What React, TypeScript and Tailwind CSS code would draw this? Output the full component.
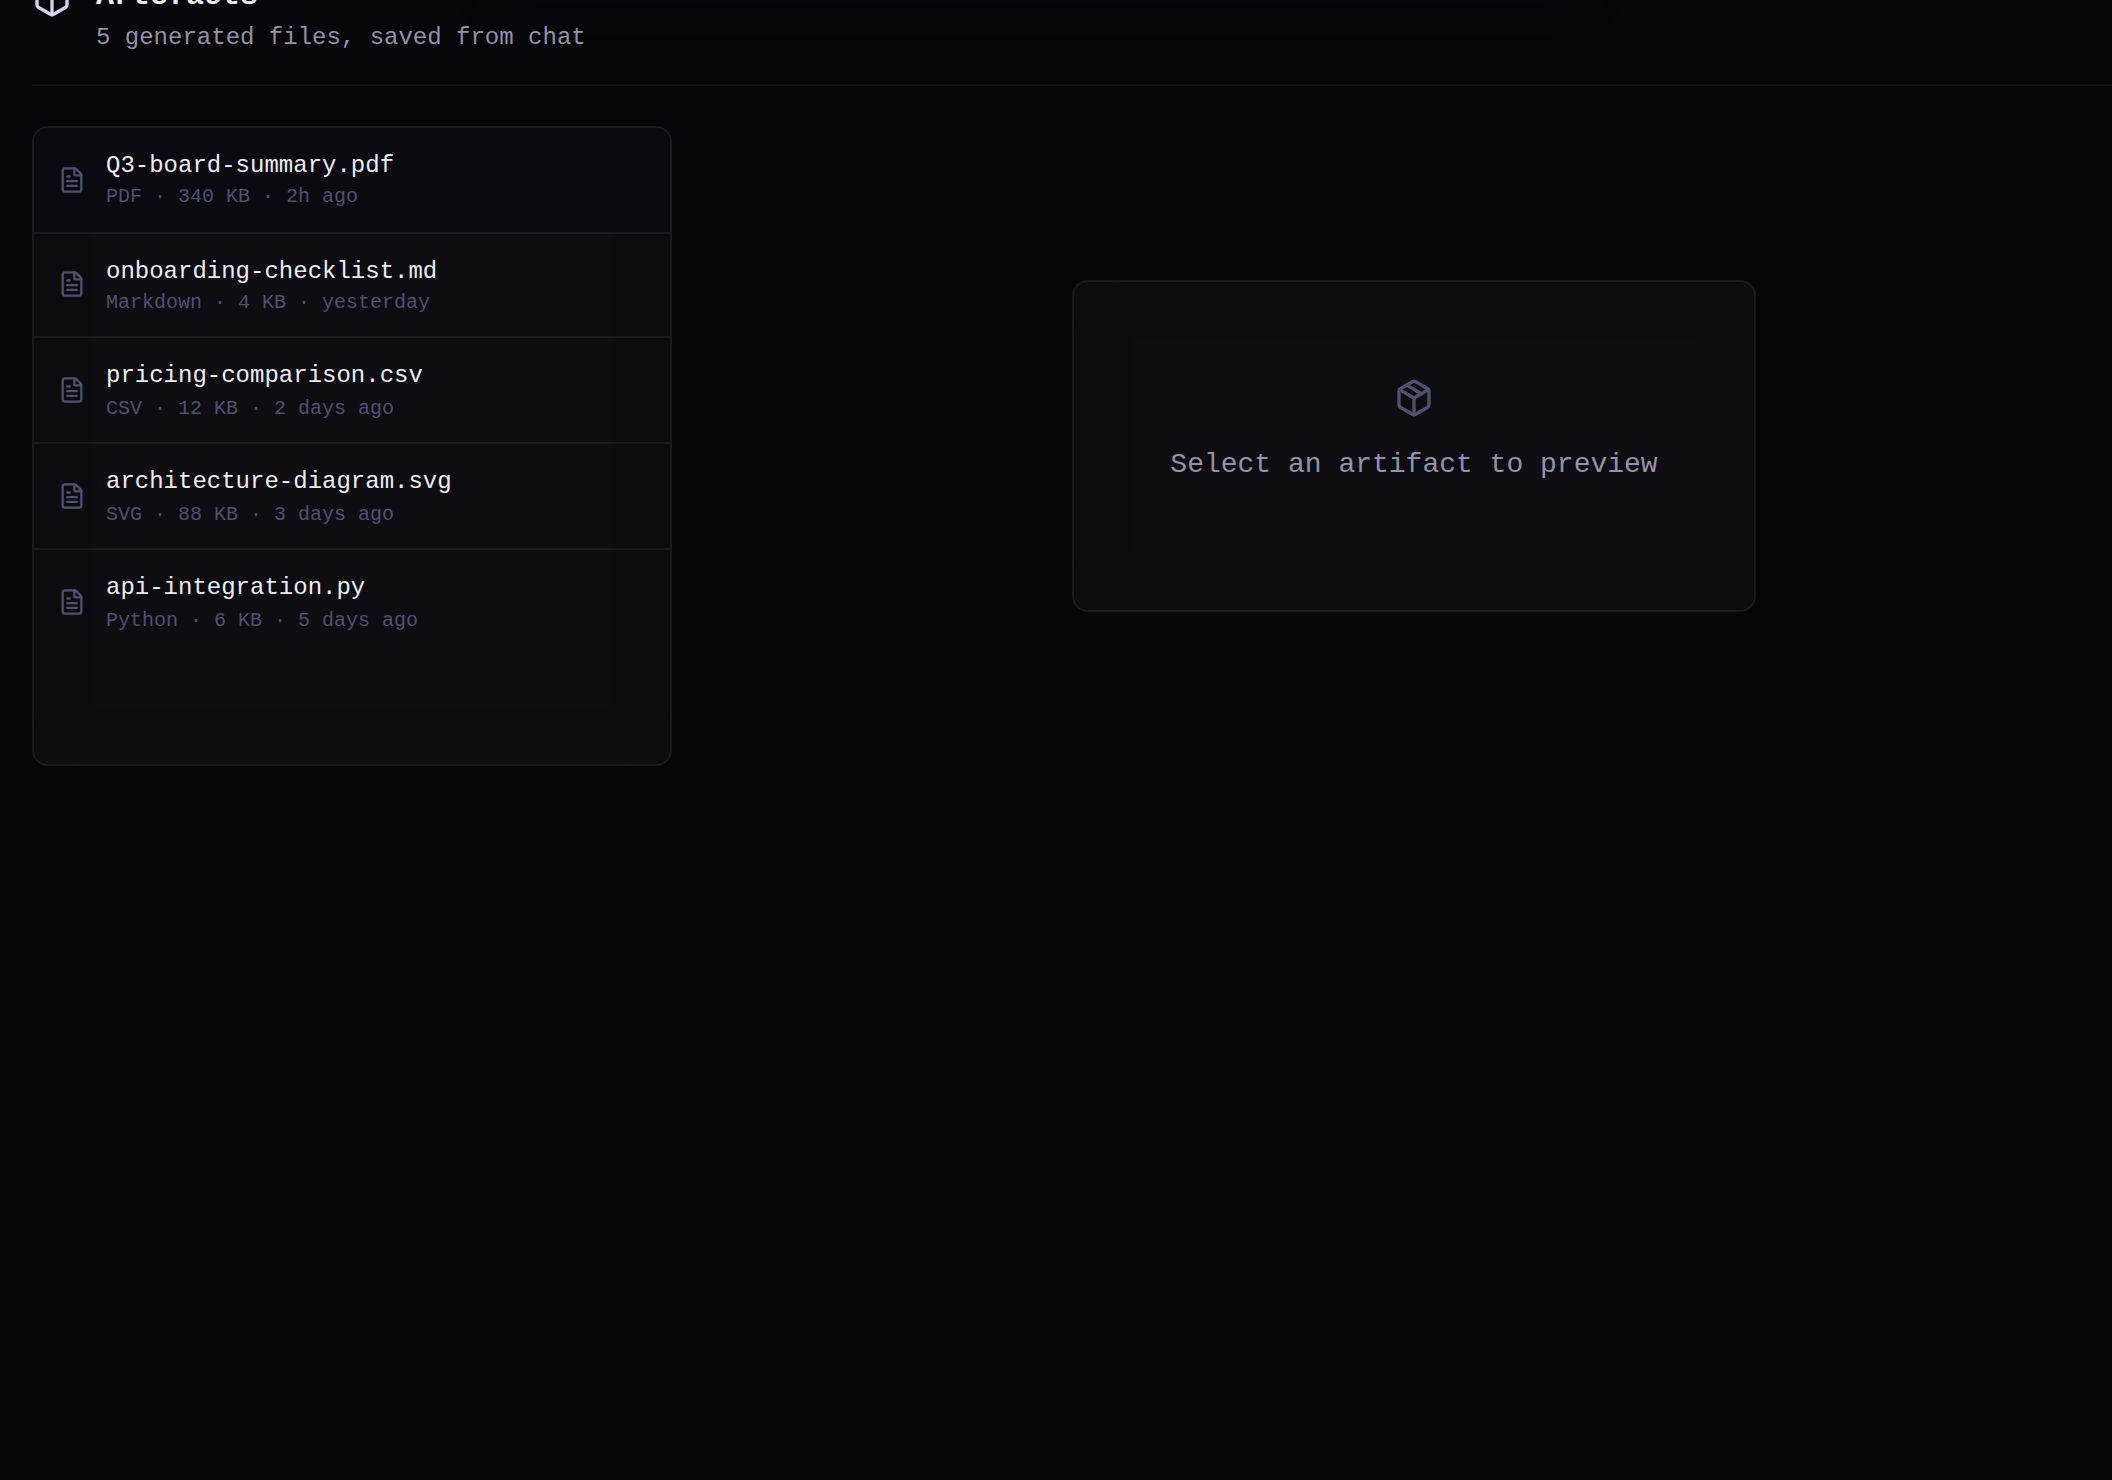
import { FileText, Package } from "lucide-react";

interface Artifact {
    name: string;
    kind: string;
    size: string;
    age: string;
}

const artifacts: Artifact[] = [
    { name: "Q3-board-summary.pdf", kind: "PDF", size: "340 KB", age: "2h ago" },
    { name: "onboarding-checklist.md", kind: "Markdown", size: "4 KB", age: "yesterday" },
    { name: "pricing-comparison.csv", kind: "CSV", size: "12 KB", age: "2 days ago" },
    { name: "architecture-diagram.svg", kind: "SVG", size: "88 KB", age: "3 days ago" },
    { name: "api-integration.py", kind: "Python", size: "6 KB", age: "5 days ago" },
];

const cardClasses =
    "rounded-2xl border-2 border-[#1b1b1e] bg-[#0e0d12] shadow-[inset_0_0_48px_#0e0e10]";

function ArtifactRow({ artifact, active }: { artifact: Artifact; active: boolean }) {
    return (
        <li
            className={`group flex h-[106px] items-start gap-5 border-b-2 border-[#1b1b1e] pl-6 last:border-b-0 nth-2:h-[104px] ${
                active ? "bg-[#0a0a10]" : ""
            }`}
        >
            <FileText className="mt-[38px] size-7 shrink-0 text-[#525070] group-nth-2:mt-9" />
            <div className="pt-[21px]">
                <div className="text-[24px] leading-[33px] text-[#ededf0]">{artifact.name}</div>
                <div className="text-[20px] leading-[29px] text-[#525070] group-nth-[n+3]:mt-0.5">
                    {artifact.kind} · {artifact.size} · {artifact.age}
                </div>
            </div>
        </li>
    );
}

export default function App() {
    return (
        <div className="relative h-[1480px] w-[2112px] overflow-hidden bg-[#060608] pl-8 font-['Liberation_Mono',monospace]">
            {/* faint glow behind the header */}
            <div className="absolute -top-20 left-[480px] h-[100px] w-[1120px] rounded-full bg-[#05040a] blur-md" />

            <header className="relative flex h-[86px] items-end gap-6 border-b-2 border-[#141416] pb-[30px]">
                <Package className="mb-9 size-10 shrink-0 text-[#d5d3ee]" />
                <div>
                    <h1 className="text-[30px] leading-[40px] font-bold text-[#ededf0]">Artefacts</h1>
                    <p className="mt-[5px] text-[24px] leading-[33px] text-[#9492a6]">
                        {artifacts.length} generated files, saved from chat
                    </p>
                </div>
            </header>

            <main className="mt-10 flex items-center">
                <ul className={`h-[640px] w-[640px] overflow-hidden ${cardClasses}`}>
                    {artifacts.map((artifact, i) => (
                        <ArtifactRow key={artifact.name} artifact={artifact} active={i === 0} />
                    ))}
                </ul>

                <section
                    className={`ml-[400px] flex h-[332px] w-[684px] flex-col items-center pt-24 ${cardClasses}`}
                >
                    <Package className="size-10 text-[#525070]" />
                    <p className="mt-[25px] text-[28px] leading-[43px] text-[#9492a6]">
                        Select an artifact to preview
                    </p>
                </section>
            </main>
        </div>
    );
}
